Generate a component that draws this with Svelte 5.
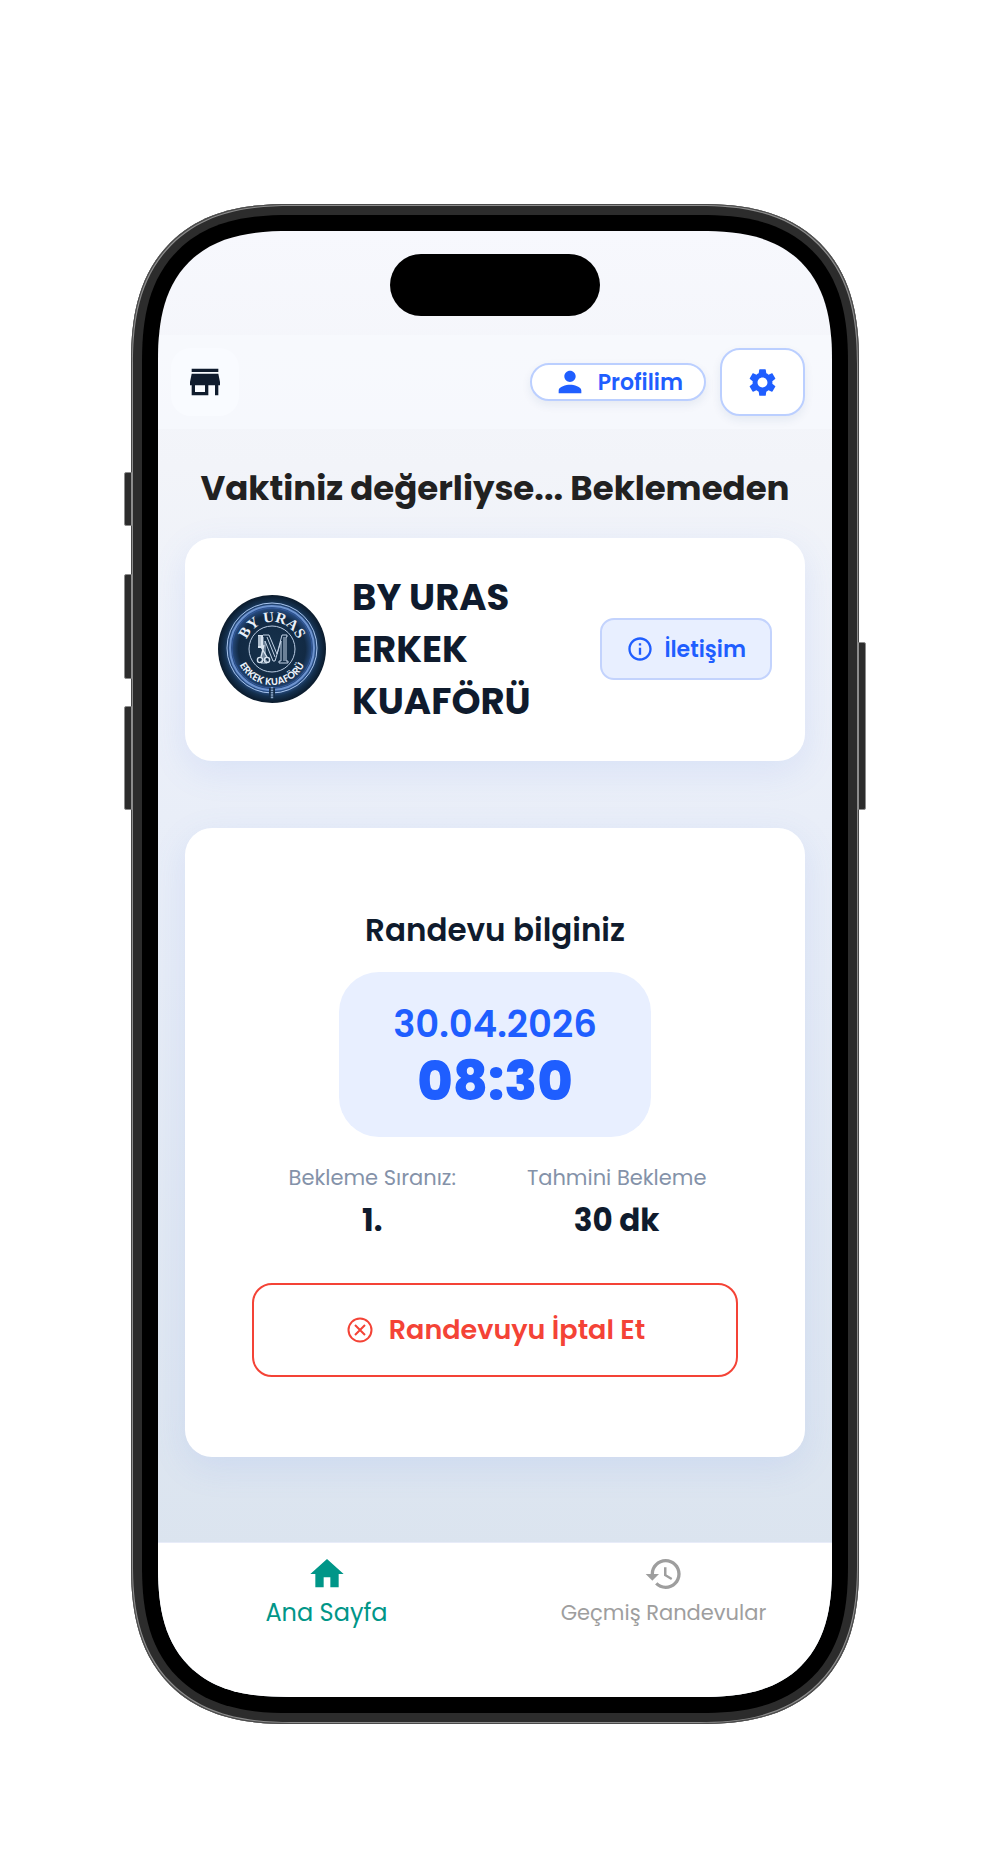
<script>
  let shop = {
    slogan: 'Vaktiniz değerliyse... Beklemeden',
    name: 'BY URAS ERKEK KUAFÖRÜ',
  };

  let appointment = {
    date: '30.04.2026',
    time: '08:30',
  };

  let stats = [
    { label: 'Bekleme Sıranız:', value: '1.' },
    { label: 'Tahmini Bekleme', value: '30 dk' },
  ];

  let activeTab = 'home';
</script>

<main>
  <div class="phone">
    <span class="key action"></span>
    <span class="key volume-up"></span>
    <span class="key volume-down"></span>
    <span class="key power"></span>

    <div class="bezel">
      <div class="screen">
        <div class="status-bar">
          <div class="island"></div>
        </div>

        <header>
          <button class="store" aria-label="Dükkan">
            <svg width="40" height="40" viewBox="0 0 24 24" fill="currentColor">
              <path d="M20 4H4v2h16V4zm1 10v-2l-1-5H4l-1 5v2h1v6h10v-6h4v6h2v-6h1zm-9 4H6v-4h6v4z" />
            </svg>
          </button>
          <button class="profile">
            <svg width="34" height="34" viewBox="0 0 24 24" fill="currentColor">
              <path d="M12 12c2.21 0 4-1.79 4-4s-1.79-4-4-4-4 1.79-4 4 1.79 4 4 4zm0 2c-2.67 0-8 1.34-8 4v2h16v-2c0-2.66-5.33-4-8-4z" />
            </svg>
            Profilim
          </button>
          <button class="settings" aria-label="Ayarlar">
            <svg width="33" height="33" viewBox="0 0 24 24" fill="currentColor">
              <path d="M19.14 12.94c.04-.3.06-.61.06-.94 0-.32-.02-.64-.07-.94l2.03-1.58c.18-.14.23-.41.12-.61l-1.92-3.32c-.12-.22-.37-.29-.59-.22l-2.39.96c-.5-.38-1.03-.7-1.62-.94l-.36-2.54c-.04-.24-.24-.41-.48-.41h-3.84c-.24 0-.43.17-.47.41l-.36 2.54c-.59.24-1.13.57-1.62.94l-2.39-.96c-.22-.08-.47 0-.59.22L2.74 8.87c-.12.21-.08.47.12.61l2.03 1.58c-.05.3-.09.63-.09.94s.02.64.07.94l-2.03 1.58c-.18.14-.23.41-.12.61l1.92 3.32c.12.22.37.29.59.22l2.39-.96c.5.38 1.03.7 1.62.94l.36 2.54c.05.24.24.41.48.41h3.84c.24 0 .44-.17.47-.41l.36-2.54c.59-.24 1.13-.56 1.62-.94l2.39.96c.22.08.47 0 .59-.22l1.92-3.32c.12-.22.07-.47-.12-.61l-2.01-1.58zM12 15.6c-1.98 0-3.6-1.62-3.6-3.6s1.62-3.6 3.6-3.6 3.6 1.62 3.6 3.6-1.62 3.6-3.6 3.6z" />
            </svg>
          </button>
        </header>

        <div class="content">
          <h1>{shop.slogan}</h1>

          <section class="card shop">
            <svg class="logo" viewBox="0 0 108 108" role="img" aria-label="By Uras Erkek Kuaförü">
              <defs>
                <radialGradient id="badge">
                  <stop offset="0" stop-color="#17324c" />
                  <stop offset="0.62" stop-color="#122a44" />
                  <stop offset="0.78" stop-color="#2c5490" />
                  <stop offset="0.88" stop-color="#14304e" />
                  <stop offset="1" stop-color="#0a1a2b" />
                </radialGradient>
                <path id="arc-top" d="M27 54a27 27 0 0 1 54 0" />
                <path id="arc-bottom" d="M18 54a36 36 0 0 0 72 0" />
              </defs>
              <circle cx="54" cy="54" r="54" fill="url(#badge)" />
              <g fill="none">
                <circle cx="54" cy="53" r="45" stroke="#a9c6ee" stroke-width="1" />
                <circle cx="54" cy="53" r="42" stroke="#6d93cf" stroke-width="2" />
                <circle cx="54" cy="53" r="40" stroke="#34599a" stroke-width="1" />
                <circle cx="54" cy="54" r="23" stroke="#b9cbe2" stroke-width="1" />
              </g>
              <text class="arc-name" text-anchor="middle"><textPath href="#arc-top" startOffset="50%">BY URAS</textPath></text>
              <text class="arc-kind" text-anchor="middle"><textPath href="#arc-bottom" startOffset="50%">ERKEK KUAFÖRÜ</textPath></text>
              <!-- monogram -->
              <g fill="none" stroke="#c3d3e6" stroke-width="1">
                <path d="M45 40h6l8 19 5-19h5v2h-1v24h2v2h-9v-2h2V46l-6 20h-2l-8-20v20h2v2h-6v-2h2V42h-2z" />
                <path d="M49 42l8 20M66 42v24" />
              </g>
              <!-- comb and scissors -->
              <path d="M40 40h5v13h-5z" fill="#d9e4f0" />
              <path d="M40 42h3M40 44h3M40 46h3M40 48h3M40 50h3" stroke="#4a6580" stroke-width="0.6" />
              <g fill="none" stroke="#d9e4f0" stroke-width="1.4">
                <path d="M46 50l-3 12M43 52l6 10" />
                <circle cx="42" cy="65" r="2.6" />
                <circle cx="49" cy="65" r="2.6" />
              </g>
              <path d="M51 93h6v10h-6z" fill="#142d49" />
              <path d="M54 92v12" stroke="#8aa6c8" stroke-width="2.4" stroke-dasharray="1.6 0.8" />
            </svg>
            <h2>{shop.name}</h2>
            <button class="contact">
              <svg width="28" height="28" viewBox="0 0 24 24" fill="currentColor">
                <path d="M11 7h2v2h-2zm0 4h2v6h-2zm1-9C6.48 2 2 6.48 2 12s4.48 10 10 10 10-4.48 10-10S17.52 2 12 2zm0 18c-4.41 0-8-3.59-8-8s3.59-8 8-8 8 3.59 8 8-3.59 8-8 8z" />
              </svg>
              İletişim
            </button>
          </section>

          <section class="card appointment">
            <h3>Randevu bilginiz</h3>
            <div class="slot">
              <span class="date">{appointment.date}</span>
              <span class="time">{appointment.time}</span>
            </div>
            <div class="stats">
              {#each stats as stat}
                <div class="stat">
                  <span class="label">{stat.label}</span>
                  <span class="value">{stat.value}</span>
                </div>
              {/each}
            </div>
            <button class="cancel">
              <svg width="30" height="30" viewBox="0 0 24 24" fill="none" stroke="currentColor" stroke-width="1.6">
                <circle cx="12" cy="12" r="9.2" />
                <path d="M8 8l8 8M16 8l-8 8" />
              </svg>
              Randevuyu İptal Et
            </button>
          </section>
        </div>

        <nav>
          <button class="tab" class:active={activeTab === 'home'} on:click={() => (activeTab = 'home')}>
            <svg width="40" height="40" viewBox="0 0 24 24" fill="currentColor">
              <path d="M10 20v-6h4v6h5v-8h3L12 3 2 12h3v8z" />
            </svg>
            Ana Sayfa
          </button>
          <button class="tab" class:active={activeTab === 'history'} on:click={() => (activeTab = 'history')}>
            <svg width="40" height="40" viewBox="0 0 24 24" fill="currentColor">
              <path d="M13 3c-4.97 0-9 4.03-9 9H1l3.89 3.89.07.14L9 12H6c0-3.87 3.13-7 7-7s7 3.13 7 7-3.13 7-7 7c-1.93 0-3.68-.79-4.94-2.06l-1.42 1.42C8.27 19.99 10.51 21 13 21c4.97 0 9-4.03 9-9s-4.03-9-9-9zm-1 5v5l4.28 2.54.72-1.21-3.5-2.08V8H12z" />
            </svg>
            Geçmiş Randevular
          </button>
        </nav>
      </div>
    </div>
  </div>
</main>

<style>
  :global(body) {
    margin: 0;
    background: #ffffff;
  }

  main {
    box-sizing: border-box;
    min-height: 100vh;
    padding: 204px 131px 151px;
    font-family: Poppins, Inter, "Noto Sans", sans-serif;
    color: #0f1b2d;
  }

  h1, h2, h3 {
    margin: 0;
  }

  button {
    display: flex;
    align-items: center;
    justify-content: center;
    box-sizing: border-box;
    margin: 0;
    padding: 0;
    border: none;
    background: none;
    font-family: inherit;
    cursor: pointer;
  }

  svg {
    flex: none;
  }

  .phone {
    position: relative;
    padding: 11px;
    border-radius: 132px;
    background: #2c2c2c;
    box-shadow: inset 0 0 0 1px #4a4a4a, inset 0 0 0 2px #8c8c8c;
  }

  .bezel {
    padding: 16px;
    border-radius: 121px;
    background: #000000;
  }

  .screen {
    display: flex;
    flex-direction: column;
    overflow: hidden;
    border-radius: 105px;
    background: linear-gradient(180deg, #f7f8fd 0%, #f2f4f9 16%, #e9eef8 40%, #dbe4ef 90%);
  }

  /* smoother corners where the browser can draw them */
  @supports (corner-shape: squircle) {
    .phone {
      border-radius: 159px;
      corner-shape: superellipse(1.3);
    }

    .bezel {
      border-radius: 148px;
      corner-shape: superellipse(1.33);
    }

    .screen {
      border-radius: 132px;
      corner-shape: superellipse(1.37);
    }
  }

  /* hardware keys on the edges of the case */
  .key {
    position: absolute;
    left: -7px;
    box-sizing: border-box;
    width: 8px;
    border: 1px solid #8c8c8c;
    border-radius: 2px 0 0 2px;
    background: #2c2c2c;
  }

  .action {
    top: 268px;
    height: 54px;
  }

  .volume-up {
    top: 370px;
    height: 105px;
  }

  .volume-down {
    top: 502px;
    height: 104px;
  }

  .power {
    top: 438px;
    right: -7px;
    left: auto;
    height: 168px;
    border-radius: 0 2px 2px 0;
  }

  .status-bar {
    display: flex;
    justify-content: center;
    padding: 23px 0 19px;
  }

  .island {
    width: 210px;
    height: 62px;
    border-radius: 31px;
    background: #000000;
  }

  header {
    display: flex;
    align-items: center;
    gap: 14px;
    padding: 13px 27px 13px 13px;
    background: rgba(250, 251, 255, 0.5);
  }

  .store {
    width: 68px;
    height: 68px;
    margin-right: auto;
    border-radius: 20px;
    background: #f9fbff;
    color: #0f1b2d;
  }

  .profile {
    gap: 11px;
    height: 38px;
    padding: 0 21px;
    border: 2px solid #bbcfff;
    border-radius: 20px;
    background: #ffffff;
    box-shadow: 0 4px 10px rgba(30, 60, 120, 0.08);
    color: #1f5eff;
    font-size: 22px;
    font-weight: 600;
  }

  .settings {
    width: 85px;
    height: 68px;
    border: 2px solid #bbcfff;
    border-radius: 20px;
    background: #ffffff;
    box-shadow: 0 4px 10px rgba(30, 60, 120, 0.08);
    color: #1f5eff;
  }

  .content {
    display: flex;
    flex-direction: column;
    padding: 35px 27px 85px;
  }

  h1 {
    margin-bottom: 26px;
    color: #212121;
    font-size: 34px;
    font-weight: 700;
    line-height: 48px;
    text-align: center;
    white-space: nowrap;
  }

  .card {
    border-radius: 27px;
    background: #ffffff;
    box-shadow: 0 10px 34px rgba(100, 140, 240, 0.13);
  }

  .shop {
    display: flex;
    align-items: center;
    padding: 33px 33px 34px;
  }

  .logo {
    width: 108px;
    height: 108px;
  }

  .arc-name {
    fill: #eaf1fa;
    font-family: "Liberation Serif", serif;
    font-size: 15px;
    font-weight: 700;
  }

  .arc-kind {
    fill: #eaf1fa;
    font-size: 10px;
    font-weight: 600;
  }

  h2 {
    flex: 1;
    margin: 0 26px;
    font-size: 37px;
    font-weight: 700;
    line-height: 52px;
  }

  .contact {
    gap: 10px;
    height: 62px;
    padding: 0 24px;
    border: 2px solid #c3d3fd;
    border-radius: 14px;
    background: #e8efff;
    color: #1f5eff;
    font-size: 22px;
    font-weight: 600;
  }

  .appointment {
    display: flex;
    flex-direction: column;
    align-items: center;
    margin-top: 67px;
    padding: 80px 67px;
  }

  h3 {
    font-size: 31px;
    font-weight: 600;
    line-height: 44px;
  }

  .slot {
    display: flex;
    flex-direction: column;
    align-items: center;
    margin-top: 20px;
    padding: 25px 54px 27px;
    border-radius: 40px;
    background: #e8efff;
    color: #1f5eff;
  }

  .date {
    font-size: 37px;
    font-weight: 600;
    line-height: 55px;
  }

  .time {
    font-size: 54px;
    font-weight: 800;
    line-height: 58px;
  }

  .stats {
    display: flex;
    gap: 71px;
    margin-top: 25px;
    padding-left: 5px;
  }

  .stat {
    display: flex;
    flex-direction: column;
    align-items: center;
  }

  .label {
    color: #8492a9;
    font-size: 21px;
    line-height: 32px;
  }

  .value {
    margin-top: 4px;
    font-size: 31px;
    font-weight: 700;
    line-height: 44px;
  }

  .cancel {
    gap: 14px;
    align-self: stretch;
    height: 94px;
    margin-top: 41px;
    border: 2px solid #f44336;
    border-radius: 20px;
    color: #f44336;
    font-size: 27px;
    font-weight: 600;
  }

  nav {
    display: flex;
    padding: 11px 0 65px;
    border-top: 1px solid #e8ecf9;
    background: #ffffff;
  }

  .tab {
    flex: 1;
    flex-direction: column;
    justify-content: flex-start;
    color: #9e9e9e;
    font-size: 21px;
    line-height: 38px;
  }

  .tab.active {
    color: #009688;
    font-size: 24px;
  }

  @media (max-width: 900px) {
    main {
      padding: 40px 16px;
    }

    h1 {
      white-space: normal;
    }
  }
</style>
